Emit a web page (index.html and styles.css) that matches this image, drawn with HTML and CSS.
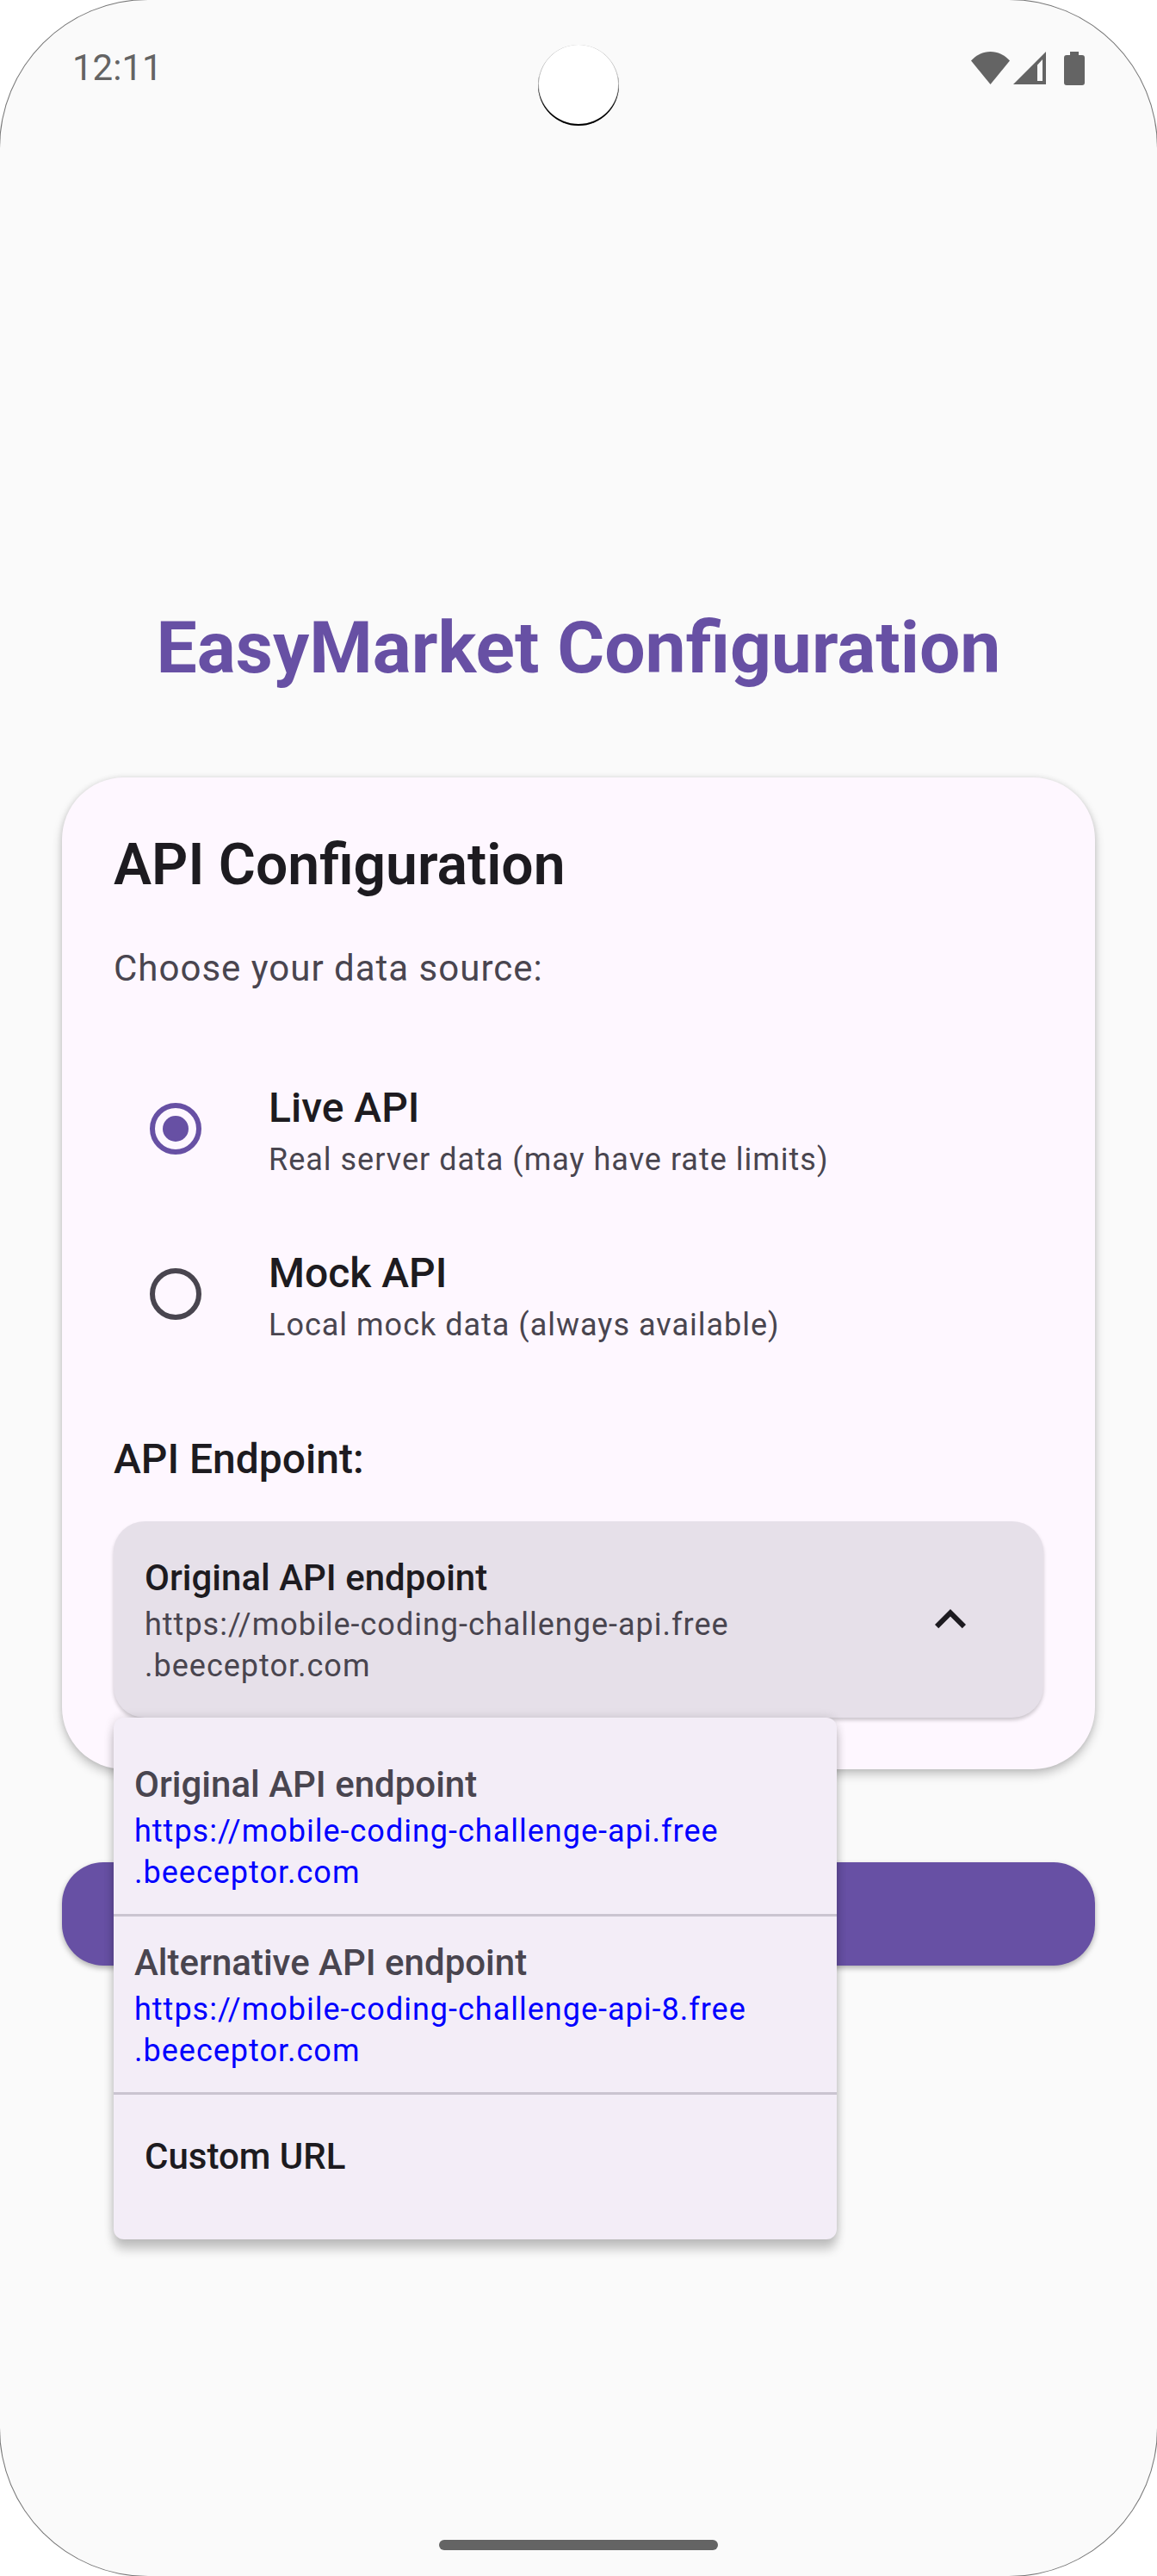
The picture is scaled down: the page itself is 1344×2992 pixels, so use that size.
FILE: index.html
```html
<!DOCTYPE html>
<html lang="en">
<head>
  <meta charset="utf-8">
  <meta name="viewport" content="width=device-width, initial-scale=1">
  <title>EasyMarket Configuration</title>
  <link rel="stylesheet" href="styles.css">
</head>
<body>
  <div class="screen">
    <header class="status-bar">
      <time class="clock">12:11</time>
      <div class="status-icons">
        <svg class="icon-wifi" viewBox="0 0 45 38" aria-hidden="true"><path d="M22.5 38 0 10.500C6 4 14 0 22.500 0S39 4 45 10.500Z"/></svg>
        <svg class="icon-signal" viewBox="0 0 38 38" aria-hidden="true"><path fill-rule="evenodd" d="M38 0V38H0ZM34 9 28 15.500V34H34Z"/></svg>
        <svg class="icon-battery" viewBox="0 0 24 39" aria-hidden="true"><path d="M7 0H17V4H21Q24 4 24 7V36Q24 39 21 39H3Q0 39 0 36V7Q0 4 3 4H7Z"/></svg>
      </div>
      <span class="camera"></span>
    </header>

    <main class="content">
      <h1 class="page-title">EasyMarket Configuration</h1>

      <section class="card">
        <h2 class="card-title">API Configuration</h2>
        <fieldset class="sources">
          <legend class="hint">Choose your data source:</legend>
          <label class="source">
            <input class="radio" type="radio" name="source" checked>
            <span class="source-text">
              <span class="label-large">Live API</span>
              <span class="caption">Real server data (may have rate limits)</span>
            </span>
          </label>
          <label class="source">
            <input class="radio" type="radio" name="source">
            <span class="source-text">
              <span class="label-large">Mock API</span>
              <span class="caption">Local mock data (always available)</span>
            </span>
          </label>
        </fieldset>

        <h3 class="label-large endpoint-title">API Endpoint:</h3>
        <div class="dropdown">
          <button class="dropdown-toggle" type="button" aria-haspopup="true" aria-expanded="true">
            <span class="endpoint">
              <span class="label-small">Original API endpoint</span>
              <span class="caption">https://mobile-coding-challenge-api.free<br>.beeceptor.com</span>
            </span>
            <svg class="chevron" viewBox="0 0 24 24" aria-hidden="true"><path d="M7.410 15.410 12 10.830l4.590 4.580L18 14l-6-6-6 6z"/></svg>
          </button>
          <ul class="menu">
            <li class="menu-item">
              <span class="label-small">Original API endpoint</span>
              <a class="caption link" href="https://mobile-coding-challenge-api.free.beeceptor.com">https://mobile-coding-challenge-api.free<br>.beeceptor.com</a>
            </li>
            <li class="menu-item">
              <span class="label-small">Alternative API endpoint</span>
              <a class="caption link" href="https://mobile-coding-challenge-api-8.free.beeceptor.com">https://mobile-coding-challenge-api-8.free<br>.beeceptor.com</a>
            </li>
            <li>
              <button class="menu-button label-small" type="button">Custom URL</button>
            </li>
          </ul>
        </div>
      </section>

      <button class="submit" type="button" aria-label="Continue"></button>
    </main>

    <footer class="nav-bar"><span class="nav-handle"></span></footer>
  </div>
</body>
</html>
```

FILE: styles.css
```css
:root {
  --primary: #6750a4;
  --text: #1d1b20;
  --text-muted: #49454f;
  --background: #fafafa;
  --surface: #fef7ff;
  --surface-highest: #e6e0e9;
  --menu: #f3edf7;
  --divider: #cac4d0;
  --system: #646464;
}

* {
  box-sizing: border-box;
}

body {
  margin: 0;
  background: #fff;
  color: var(--text);
  font-family: Roboto, sans-serif;
}

button {
  border: 0;
  font-family: inherit;
  text-align: left;
  cursor: pointer;
}

.screen {
  display: flex;
  flex-direction: column;
  min-height: 100vh;
  background: var(--background);
  border-radius: 172px;
  box-shadow: 0 0 0 1px #777;
}

/* System bars */
.status-bar {
  position: relative;
  display: flex;
  align-items: center;
  justify-content: space-between;
  height: 158px;
  padding: 0 84px;
  color: var(--system);
}

.clock {
  font-size: 42px;
  line-height: 60px;
}

.status-icons {
  display: flex;
  align-items: center;
  fill: currentColor;
}

.icon-wifi {
  width: 45px;
  height: 38px;
  margin-right: 4px;
}

.icon-signal {
  width: 38px;
  height: 38px;
  margin-right: 21px;
}

.icon-battery {
  width: 24px;
  height: 39px;
}

.camera {
  position: absolute;
  top: 52px;
  left: 50%;
  width: 94px;
  height: 94px;
  margin-left: -47px;
  border-radius: 50%;
  background: #fff;
  box-shadow: inset 0 -2px 0 0 #000, inset 0 -1px 0 1px rgba(0, 0, 0, 0.3);
}

.nav-bar {
  display: flex;
  justify-content: center;
  padding: 127px 0 30px;
}

.nav-handle {
  width: 324px;
  height: 12px;
  border-radius: 6px;
  background: var(--system);
}

/* Page */
.content {
  flex: 1;
  display: flex;
  flex-direction: column;
  justify-content: center;
  padding: 0 72px;
}

.page-title {
  margin: 0 0 96px;
  color: var(--primary);
  font-size: 84px;
  line-height: 108px;
  font-weight: 700;
  text-align: center;
}

.card {
  padding: 60px;
  border-radius: 72px;
  background: var(--surface);
  box-shadow: 0 6px 12px rgba(0, 0, 0, 0.22), 0 0 6px rgba(0, 0, 0, 0.1);
}

.card-title {
  margin: 0 0 48px;
  font-size: 66px;
  line-height: 84px;
  font-weight: 600;
}

.label-large {
  font-size: 48px;
  line-height: 72px;
  font-weight: 500;
}

.label-small {
  font-size: 42px;
  line-height: 60px;
  font-weight: 500;
}

.caption {
  color: var(--text-muted);
  font-size: 36px;
  line-height: 48px;
  letter-spacing: 1px;
}

.sources {
  margin: 0 0 60px;
  padding: 0;
  border: 0;
}

.hint {
  margin-bottom: 60px;
  padding: 0;
  color: var(--text-muted);
  font-size: 42px;
  line-height: 60px;
  letter-spacing: 1px;
}

.source {
  display: flex;
  align-items: center;
  gap: 78px;
  padding: 36px 42px;
}

.source-text,
.endpoint {
  display: flex;
  flex-direction: column;
}

.radio {
  flex: none;
  display: grid;
  place-items: center;
  appearance: none;
  width: 60px;
  height: 60px;
  margin: 0;
  border: 6px solid var(--text-muted);
  border-radius: 50%;
}

.radio:checked {
  border-color: var(--primary);
}

.radio:checked::before {
  content: "";
  width: 30px;
  height: 30px;
  border-radius: 50%;
  background: var(--primary);
}

.endpoint-title {
  margin: 0 0 36px;
}

/* Endpoint picker */
.dropdown {
  position: relative;
}

.dropdown-toggle {
  display: flex;
  align-items: center;
  justify-content: space-between;
  width: 100%;
  padding: 36px 72px 36px 36px;
  border-radius: 36px;
  background: var(--surface-highest);
  color: var(--text);
  box-shadow: 0 3px 4px rgba(0, 0, 0, 0.2);
}

.chevron {
  flex: none;
  width: 72px;
  height: 72px;
  fill: currentColor;
}

.menu {
  position: absolute;
  z-index: 1;
  top: 100%;
  left: 0;
  width: 840px;
  max-width: 100%;
  margin: 0;
  padding: 24px 0;
  border-radius: 12px;
  background: var(--menu);
  list-style: none;
  box-shadow: 0 12px 12px rgba(0, 0, 0, 0.2), 0 0 12px rgba(0, 0, 0, 0.14);
}

.menu-item {
  display: flex;
  flex-direction: column;
  padding: 24px;
  border-bottom: 3px solid var(--divider);
  color: var(--text-muted);
}

.link {
  color: #00f;
  text-decoration: none;
}

.menu-button {
  width: 100%;
  padding: 42px 36px;
  background: none;
  color: var(--text);
}

.submit {
  height: 120px;
  margin-top: 108px;
  border-radius: 48px;
  background: var(--primary);
  box-shadow: 0 3px 6px rgba(0, 0, 0, 0.3);
}
```
